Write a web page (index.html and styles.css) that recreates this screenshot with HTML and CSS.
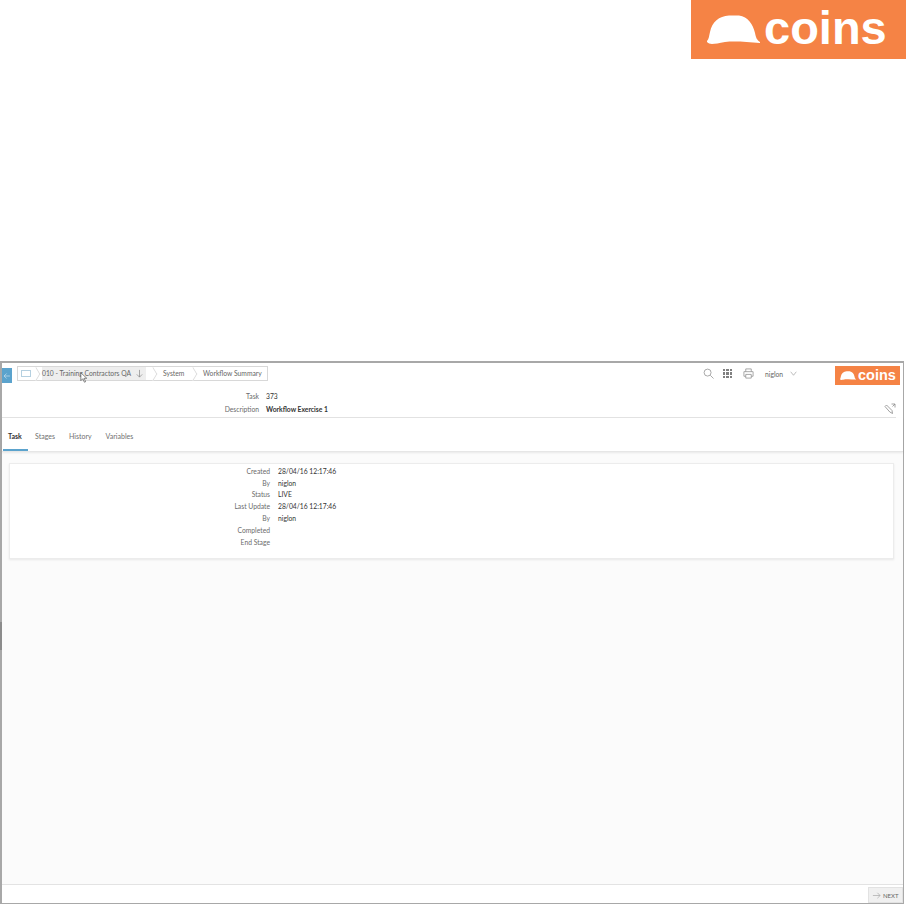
FILE: index.html
```html
<!DOCTYPE html>
<html lang="en">
<head>
    <meta charset="UTF-8">
    <meta name="viewport" content="width=device-width, initial-scale=1.0">
    <title>Workflow Summary</title>
    <link rel="stylesheet" href="styles.css">
</head>
<body>
    <div class="banner">
        <div class="logo logo-large">
            <svg class="hat" viewBox="0 0 53 29"><path d="M0 26 C2 24 2 21 3 17 C5 7 12 1 22 .5 L32 .5 C41 2 46 9 48 18 C49 23 50 25 53 27 L53 28 C40 27 28 26 18 27 C12 28 8 29 5 29 C3 29 1 28 0 27 Z"/></svg>
            <span class="logo-text">coins</span>
        </div>
    </div>
    <div class="frame">
        <div class="topbar">
            <button class="back">
                <svg viewBox="0 0 12 12"><path d="M9.500 6H2.500M5.500 3L2.500 6L5.500 9"/></svg>
            </button>
            <div class="crumbs">
                <div class="crumb crumb-home"><span class="home-icon"></span></div>
                <div class="crumb crumb-active">
                    <div class="crumb-label">010 - Training Contractors QA
                        <svg class="down" viewBox="0 0 10 10"><path d="M5 1V9M2 6L5 9L8 6"/></svg>
                    </div>
                </div>
                <div class="crumb crumb-system">System</div>
                <div class="crumb crumb-last">Workflow Summary</div>
                <svg class="cursor" viewBox="0 0 10 14"><path d="M1 1V11L3.500 8.500L5.500 13L7 12.400L5.200 8H8.500Z"/></svg>
            </div>
            <div class="tools">
                <svg class="tool" viewBox="0 0 12 12"><circle cx="5" cy="5" r="3.800"/><path d="M8 8L11.500 11.500"/></svg>
                <div class="apps">
                    <i></i><i></i><i></i><i></i><i></i><i></i><i></i><i></i><i></i>
                </div>
                <svg class="tool" viewBox="0 0 12 12"><path d="M3 4V1H9V4M3 9H1V4H11V9H9M3 7H9V11H3Z"/></svg>
                <span class="user">niglon</span>
                <svg class="chev" viewBox="0 0 10 6"><path d="M1 .5L5 5.500L9 .5"/></svg>
            </div>
            <div class="logo logo-small">
                <svg class="hat" viewBox="0 0 53 29"><path d="M0 26 C2 24 2 21 3 17 C5 7 12 1 22 .5 L32 .5 C41 2 46 9 48 18 C49 23 50 25 53 27 L53 28 C40 27 28 26 18 27 C12 28 8 29 5 29 C3 29 1 28 0 27 Z"/></svg>
                <span class="logo-text">coins</span>
            </div>
        </div>

        <div class="head">
            <div class="fields head-fields">
                <span class="label">Task</span><span class="value">373</span>
                <span class="label">Description</span><span class="value value-strong">Workflow Exercise 1</span>
            </div>
            <svg class="edit" viewBox="0 0 12 12"><path d="M1 3.500L2.500 2L8 7.500L8.500 10.500L5.800 9ZM7.500 1H11V4.500M11 1L8.500 3.500"/></svg>
        </div>

        <div class="tabs">
            <div class="tab tab-active">Task</div>
            <div class="tab">Stages</div>
            <div class="tab">History</div>
            <div class="tab">Variables</div>
        </div>

        <div class="content">
            <div class="card">
                <div class="fields card-fields">
                    <span class="label">Created</span><span class="value">28/04/16 12:17:46</span>
                    <span class="label">By</span><span class="value">niglon</span>
                    <span class="label">Status</span><span class="value">LIVE</span>
                    <span class="label">Last Update</span><span class="value">28/04/16 12:17:46</span>
                    <span class="label">By</span><span class="value">niglon</span>
                    <span class="label">Completed</span><span class="value"></span>
                    <span class="label">End Stage</span><span class="value"></span>
                </div>
            </div>
        </div>

        <div class="footer">
            <button class="next">
                <svg viewBox="0 0 10 10"><path d="M1 5H9M6 2L9 5L6 8"/></svg>
                NEXT
            </button>
        </div>
        <div class="scroll-handle"></div>
    </div>
</body>
</html>
```

FILE: styles.css
```css
* {
    box-sizing: border-box;
}
body {
    font-family: Lato, "Liberation Sans", sans-serif;
    font-size: 6.75px;
    color: #333;
    background-color: white;
    height: 904px;
    margin: 0;
    overflow: hidden;
}
svg {
    display: block;
    fill: none;
    stroke: #8a8a8a;
    stroke-width: 0.8;
}

/* logo */
.banner {
    height: 361px;
    display: flex;
    justify-content: flex-end;
}
.logo {
    background: #f58345;
    display: flex;
    align-items: center;
    color: white;
}
.logo .hat {
    fill: white;
    stroke: none;
}
.logo-text {
    font-family: "Liberation Sans", sans-serif;
    font-weight: 700;
}
.logo-large {
    width: 215px;
    height: 59px;
    padding: 0 0 1px 16px;
    gap: 4px;
}
.logo-large .hat {
    width: 53px;
    height: 29px;
}
.logo-large .logo-text {
    font-size: 47px;
    margin-top: -3px;
}
.logo-small {
    width: 65px;
    height: 19px;
    margin-left: 36px;
    margin-right: 3px;
    padding-left: 5px;
    gap: 2px;
    flex-shrink: 0;
}
.logo-small .hat {
    width: 16px;
    height: 9px;
}
.logo-small .logo-text {
    font-size: 14.500px;
    margin-top: -1px;
}

/* frame */
.frame {
    position: relative;
    height: 543px;
    width: 904px;
    border: 1px solid #a8a8a8;
    border-top-width: 2px;
    border-left-width: 2px;
    display: flex;
    flex-direction: column;
}
.scroll-handle {
    position: absolute;
    left: -2px;
    top: 259px;
    width: 2px;
    height: 28px;
    background: #8c8c8c;
}
.topbar {
    height: 26px;
    display: flex;
    align-items: flex-start;
    padding-top: 3px;
    flex-shrink: 0;
}
.back {
    width: 10px;
    height: 15px;
    margin-top: 2px;
    padding: 0;
    background: #5ba3cd;
    border: none;
}
.back svg {
    stroke: #cfe4f1;
    width: 10px;
    height: 10px;
}
.crumbs {
    position: relative;
    display: flex;
    height: 15px;
    width: 251px;
    margin-left: 5px;
    border: 1px solid #d8d8d8;
    color: #666;
    line-height: 13px;
}
.crumb {
    position: relative;
    white-space: nowrap;
    background: white;
}
.crumb::after {
    content: "";
    position: absolute;
    right: -5px;
    top: 2px;
    width: 9px;
    height: 9px;
    background: inherit;
    border-top: 1px solid #d8d8d8;
    border-right: 1px solid #d8d8d8;
    transform: scaleX(0.6) rotate(45deg);
}
.crumb-home {
    width: 18px;
    padding-left: 3px;
    z-index: 4;
}
.home-icon {
    display: block;
    width: 10px;
    height: 7px;
    margin-top: 3px;
    border: 1px solid #b5d0e0;
}
.crumb-active {
    width: 117px;
    padding-left: 6px;
    z-index: 3;
}
.crumb-label {
    display: flex;
    align-items: center;
    width: 104px;
    height: 13px;
    background: #eeeeee;
}
.crumb-label .down {
    width: 9px;
    height: 9px;
    margin-left: 4px;
}
.crumb-system {
    width: 40px;
    padding-left: 10px;
    z-index: 2;
}
.crumb-last {
    padding-left: 10px;
}
.crumb-last::after {
    display: none;
}
.cursor {
    position: absolute;
    left: 62px;
    top: 5px;
    width: 8px;
    height: 11px;
    fill: white;
    stroke: #444;
    z-index: 5;
}
.tools {
    display: flex;
    align-items: center;
    height: 15px;
    margin-left: auto;
    color: #666;
}
.tool {
    width: 11px;
    height: 11px;
}
.apps {
    display: grid;
    grid-template-columns: repeat(3, 2.300px);
    grid-auto-rows: 2.300px;
    gap: 1px;
    margin: 0 11px 0 9px;
}
.apps i {
    background: #808080;
}
.user {
    margin-left: 11px;
    width: 25px;
}
.chev {
    width: 7px;
    height: 5px;
    margin-right: 2px;
}

/* task header */
.fields {
    display: grid;
    column-gap: 7px;
    align-items: center;
}
.label {
    text-align: right;
    color: #6b6b6b;
}
.value {
    color: #333;
}
.value-strong {
    font-weight: 700;
}
.head {
    height: 29px;
    margin-right: 7px;
    position: relative;
    border-bottom: 1px solid #e3e3e3;
    flex-shrink: 0;
}
.head-fields {
    grid-template-columns: 257px 1fr;
    grid-auto-rows: 13px;
}
.edit {
    position: absolute;
    right: 0;
    top: 14px;
    width: 12px;
    height: 12px;
}

/* tabs */
.tabs {
    height: 34px;
    display: flex;
    gap: 14px;
    padding-left: 1px;
    font-size: 7px;
    border-bottom: 1px solid #e6e6e6;
    box-shadow: 0 1px 2px rgba(0, 0, 0, 0.08);
    flex-shrink: 0;
    position: relative;
}
.tab {
    line-height: 36px;
    color: #707070;
}
.tab-active {
    width: 25px;
    padding-left: 5px;
    color: #333;
    font-weight: 700;
    margin-right: -7px;
    border-bottom: 2px solid #5ba3cd;
}

/* card */
.content {
    flex: 1;
    background: #fbfbfb;
    padding: 11px 9px 0 7px;
}
.card {
    height: 96px;
    background: white;
    border: 1px solid #ececec;
    box-shadow: 0 1px 2px rgba(0, 0, 0, 0.08);
    padding-top: 1px;
}
.card-fields {
    grid-template-columns: 260px 1fr;
    column-gap: 8px;
    grid-auto-rows: 11.8px;
}
.footer {
    height: 19px;
    border-top: 1px solid #e3e3e3;
    display: flex;
    justify-content: flex-end;
    flex-shrink: 0;
}
.next {
    width: 35px;
    height: 16px;
    margin-top: 2px;
    padding: 0 0 0 3px;
    display: flex;
    align-items: center;
    gap: 2px;
    font: 6px Lato, sans-serif;
    color: #666;
    background: #f0f0f0;
    border: 1px solid #e2e2e2;
}
.next svg {
    width: 9px;
    height: 9px;
    stroke: #aaa;
}
```
